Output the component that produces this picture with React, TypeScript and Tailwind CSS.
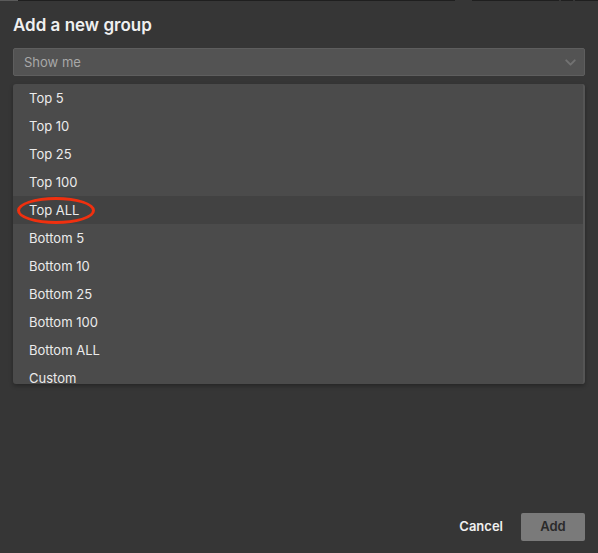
import { ChevronDown } from 'lucide-react'

const OPTIONS = [
	'Top 5',
	'Top 10',
	'Top 25',
	'Top 100',
	'Top ALL',
	'Bottom 5',
	'Bottom 10',
	'Bottom 25',
	'Bottom 100',
	'Bottom ALL',
	'Custom',
]

const SELECTED = 'Top ALL'

export default function App() {
	return (
		<div
			className="w-[598px] h-[553px] bg-[#363636] flex flex-col text-[#ebebeb] overflow-hidden"
			style={{ fontFamily: 'Inter, "Noto Sans", sans-serif' }}
		>
			{/* window edge behind the dialog */}
			<div className="flex h-px shrink-0">
				<div className="w-[18px] bg-[#5a5a5a]" />
				<div className="w-[437px] bg-[#1f1f1f]" />
				<div className="w-[17px] bg-[#363636]" />
				<div className="w-[87px] bg-[#1f1f1f]" />
				<div className="w-[2px] bg-[#363636]" />
				<div className="w-[12px] bg-[#1f1f1f]" />
				<div className="w-[2px] bg-[#363636]" />
				<div className="flex-1 bg-[#1f1f1f]" />
			</div>

			<div className="flex flex-col flex-1 px-[13px] pt-[13px] pb-[12px]">
				<h1 className="text-[17px] leading-[22px] font-semibold text-[#f0f0f0]">
					Add a new group
				</h1>

				<div className="mt-[12px] h-[28px] flex items-center justify-between rounded-[2px] border border-[#5e5e5e] bg-[#535353] pl-[10px] pr-[5px]">
					<span className="text-[13px] text-[#a8a8a8] pt-px">Show me</span>
					<ChevronDown size={17} strokeWidth={2.75} className="text-[#727272]" />
				</div>

				<div className="mt-[8px] h-[300px] overflow-hidden rounded-[3px] bg-[#4b4b4b] border-r-2 border-[#555555] shadow-[0_2px_4px_rgba(0,0,0,0.3)]">
					{OPTIONS.map((option) => (
						<div
							key={option}
							className={`relative h-[28px] flex items-center pl-[16px] pt-[2px] text-[13px] ${
								option === SELECTED ? 'bg-[#424242]' : ''
							}`}
						>
							{option}
							{option === SELECTED && (
								<span className="absolute left-[4px] top-[1px] w-[78px] h-[27px] rounded-[50%] border-[3px] border-[#f0300f]" />
							)}
						</div>
					))}
				</div>

				<div className="mt-auto flex items-center justify-end gap-[18px]">
					<button className="text-[13px] font-semibold text-[#f0f0f0]">Cancel</button>
					<button className="w-[64px] h-[28px] rounded-[2px] bg-[#7a7a7a] text-[13px] font-semibold text-[#2a2a2a]">
						Add
					</button>
				</div>
			</div>
		</div>
	)
}
